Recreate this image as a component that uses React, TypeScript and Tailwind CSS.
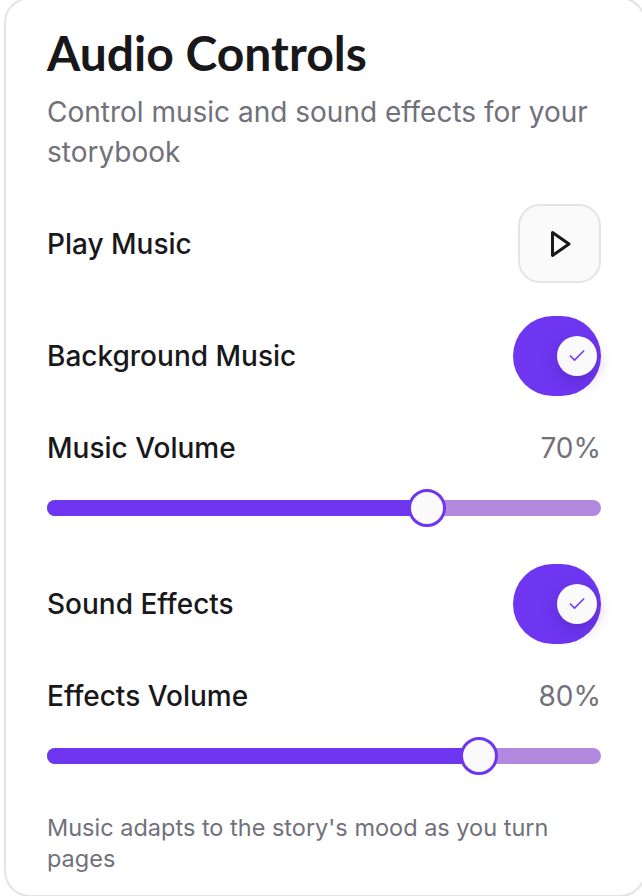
import React from 'react';
import { Check } from 'lucide-react';

const PlayButton = () => (
  <button className="flex h-[79px] w-[83px] items-center justify-center rounded-[22px] border-2 border-[#e4e4e7] bg-[#fafafa]">
    <svg width="22" height="28" viewBox="0 0 22 28" fill="none">
      <path d="M3.5 2.5 L20 14 L3.5 25.5 Z" stroke="#18181b" strokeWidth="3" strokeLinejoin="round" />
    </svg>
  </button>
);

const Toggle = () => (
  <div className="flex h-[80px] w-[88px] items-center justify-end rounded-full bg-[#6e36f1] pr-1">
    <div className="flex h-[40px] w-[40px] items-center justify-center rounded-full bg-[#fafafa] shadow-[0_6px_16px_rgba(60,20,140,0.3)]">
      <Check size={20} strokeWidth={2} color="#7440f2" />
    </div>
  </div>
);

const VolumeSlider = ({ value }: { value: number }) => {
  // thumb stays inside the track, like radix does
  const center = `calc(19px + (100% - 38px) * ${value / 100})`;
  return (
    <div className="relative h-[40px] w-full">
      <div className="absolute left-0 right-0 top-[12px] h-[16px] rounded-full bg-[#b389e0]" />
      <div className="absolute left-0 top-[12px] h-[16px] rounded-l-full bg-[#6e36f1]" style={{ width: center }} />
      <div
        className="absolute top-[1px] h-[38px] w-[38px] -translate-x-1/2 rounded-full border-[3px] border-[#6e36f1] bg-[#fafafa]"
        style={{ left: center }}
      />
    </div>
  );
};

const Row = ({ label, children }: { label: string; children: React.ReactNode }) => (
  <div className="flex items-center justify-between">
    <span className="text-[28px] font-medium leading-[32px] text-[#18181b]">{label}</span>
    {children}
  </div>
);

const VolumeLabel = ({ label, value }: { label: string; value: number }) => (
  <div className="flex items-center justify-between">
    <span className="text-[28px] font-medium leading-[32px] text-[#18181b]">{label}</span>
    <span className="text-[28px] leading-[32px] text-[#71717a]">{value}%</span>
  </div>
);

export default function App() {
  return (
    <div className="h-screen overflow-hidden bg-white pl-[4px] font-['Inter',sans-serif]">
      <div className="-mt-[3px] h-[900px] w-[642px] rounded-[26px] border-2 border-[#e4e4e7] bg-white pl-[41px] pr-[43px] pt-[24px]">
        <h2 className="font-['Lato',sans-serif] text-[48px] font-bold leading-[60px] text-[#18181b]">Audio Controls</h2>
        <p className="mt-[9px] text-[28px] leading-[40px] text-[#71717a]">
          Control music and sound effects for your storybook
        </p>

        <div className="mt-[32px]">
          <Row label="Play Music">
            <PlayButton />
          </Row>
        </div>

        <div className="mt-[33px]">
          <Row label="Background Music">
            <Toggle />
          </Row>
        </div>

        <div className="mt-[36px]">
          <VolumeLabel label="Music Volume" value={70} />
        </div>
        <div className="mt-[24px]">
          <VolumeSlider value={70} />
        </div>

        <div className="mt-[36px]">
          <Row label="Sound Effects">
            <Toggle />
          </Row>
        </div>

        <div className="mt-[36px]">
          <VolumeLabel label="Effects Volume" value={80} />
        </div>
        <div className="mt-[24px]">
          <VolumeSlider value={80} />
        </div>

        <p className="mt-[36px] text-[23.5px] leading-[31px] text-[#71717a]">
          Music adapts to the story's mood as you turn pages
        </p>
      </div>
    </div>
  );
}
